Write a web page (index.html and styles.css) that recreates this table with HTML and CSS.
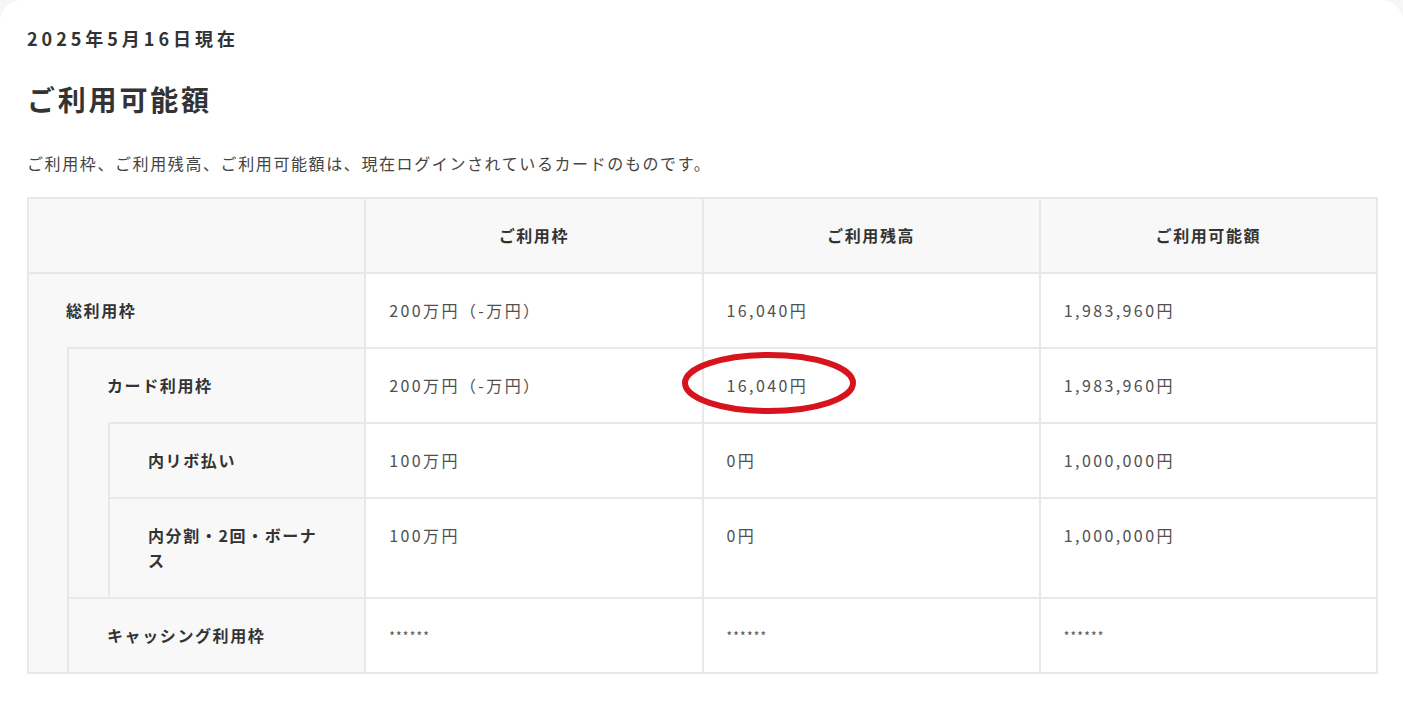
FILE: index.html
```html
<!DOCTYPE html>
<html lang="ja">
<head>
<meta charset="utf-8">
<title>ご利用可能額</title>
<link rel="stylesheet" href="styles.css">
</head>
<body>
<div class="page">
  <p class="date">2025年5月16日現在</p>
  <h1 class="title">ご利用可能額</h1>
  <p class="note">ご利用枠、ご利用残高、ご利用可能額は、現在ログインされているカードのものです。</p>

  <div class="limits">
    <div class="row head">
      <div class="label"><div class="label-box"></div></div>
      <div class="cell th">ご利用枠</div>
      <div class="cell th">ご利用残高</div>
      <div class="cell th">ご利用可能額</div>
    </div>

    <div class="row">
      <div class="label"><div class="label-box">総利用枠</div></div>
      <div class="cell">200万円（-万円）</div>
      <div class="cell">16,040円</div>
      <div class="cell">1,983,960円</div>
    </div>

    <div class="row">
      <div class="label"><div class="label-box lv">カード利用枠</div></div>
      <div class="cell">200万円（-万円）</div>
      <div class="cell marked">16,040円
        <svg class="circle-mark" width="178" height="66" viewBox="0 0 178 66" aria-hidden="true">
          <ellipse cx="88" cy="32" rx="84" ry="28" fill="none" stroke="#d7141d" stroke-width="6"/>
        </svg>
      </div>
      <div class="cell">1,983,960円</div>
    </div>

    <div class="row">
      <div class="label"><div class="nest"><div class="label-box lv">内リボ払い</div></div></div>
      <div class="cell">100万円</div>
      <div class="cell">0円</div>
      <div class="cell">1,000,000円</div>
    </div>

    <div class="row">
      <div class="label"><div class="nest"><div class="label-box lv">内分割・2回・ボーナス</div></div></div>
      <div class="cell">100万円</div>
      <div class="cell">0円</div>
      <div class="cell">1,000,000円</div>
    </div>

    <div class="row">
      <div class="label"><div class="label-box lv">キャッシング利用枠</div></div>
      <div class="cell mask">******</div>
      <div class="cell mask">******</div>
      <div class="cell mask">******</div>
    </div>
  </div>
</div>
</body>
</html>
```

FILE: styles.css
```css
html {
  background: #f6f6f6;
}

body {
  margin: 0;
  font-family: "Noto Sans CJK JP", "Noto Sans", sans-serif;
  color: #333;
}

.page {
  background: #fff;
  min-height: 701px;
  box-sizing: border-box;
  padding: 26px 25px 0 27px;
  border-radius: 22px 22px 0 0;
}

.date {
  margin: 0;
  font-size: 18px;
  line-height: 24px;
  font-weight: 700;
  letter-spacing: 0.22em;
  color: #333;
}

.title {
  margin: 29px 0 0;
  font-size: 28px;
  line-height: 40px;
  font-weight: 700;
  letter-spacing: 0.1em;
  color: #333;
}

.note {
  margin: 32px 0 0;
  font-size: 16px;
  line-height: 24px;
  letter-spacing: 0.1em;
  color: #444;
}

.limits {
  margin-top: 22px;
  border-right: 2px solid #e8e8e8;
  border-bottom: 2px solid #e8e8e8;
}

.row {
  display: grid;
  grid-template-columns: repeat(4, 1fr);
}

.label {
  display: flex;
  background: #f8f8f8;
  border-left: 2px solid #e8e8e8;
}

.nest {
  flex: 1;
  display: flex;
  margin-left: 38px;
  border-left: 2px solid #e8e8e8;
}

.label-box {
  flex: 1;
  border-top: 2px solid #e8e8e8;
  padding: 24px 40px 24px 37px;
  font-size: 16px;
  line-height: 25px;
  font-weight: 700;
  letter-spacing: 0.1em;
  color: #333;
}

.label-box.lv {
  margin-left: 38px;
  border-left: 2px solid #e8e8e8;
  padding-left: 38px;
}

.nest .label-box.lv {
  margin-left: 39px;
}

.cell {
  border-left: 2px solid #e8e8e8;
  border-top: 2px solid #e8e8e8;
  padding: 24px 23px;
  font-size: 16px;
  line-height: 25px;
  letter-spacing: 0.15em;
  color: #505050;
  background: #fff;
}

.head .cell,
.head .label-box {
  background: #f8f8f8;
}

.cell.th {
  text-align: center;
  font-weight: 700;
  letter-spacing: 0.1em;
  color: #333;
}

.cell.mask {
  font-size: 12px;
  letter-spacing: 0.1em;
}

.marked {
  position: relative;
}

.circle-mark {
  position: absolute;
  left: -23px;
  top: 2px;
}
```
